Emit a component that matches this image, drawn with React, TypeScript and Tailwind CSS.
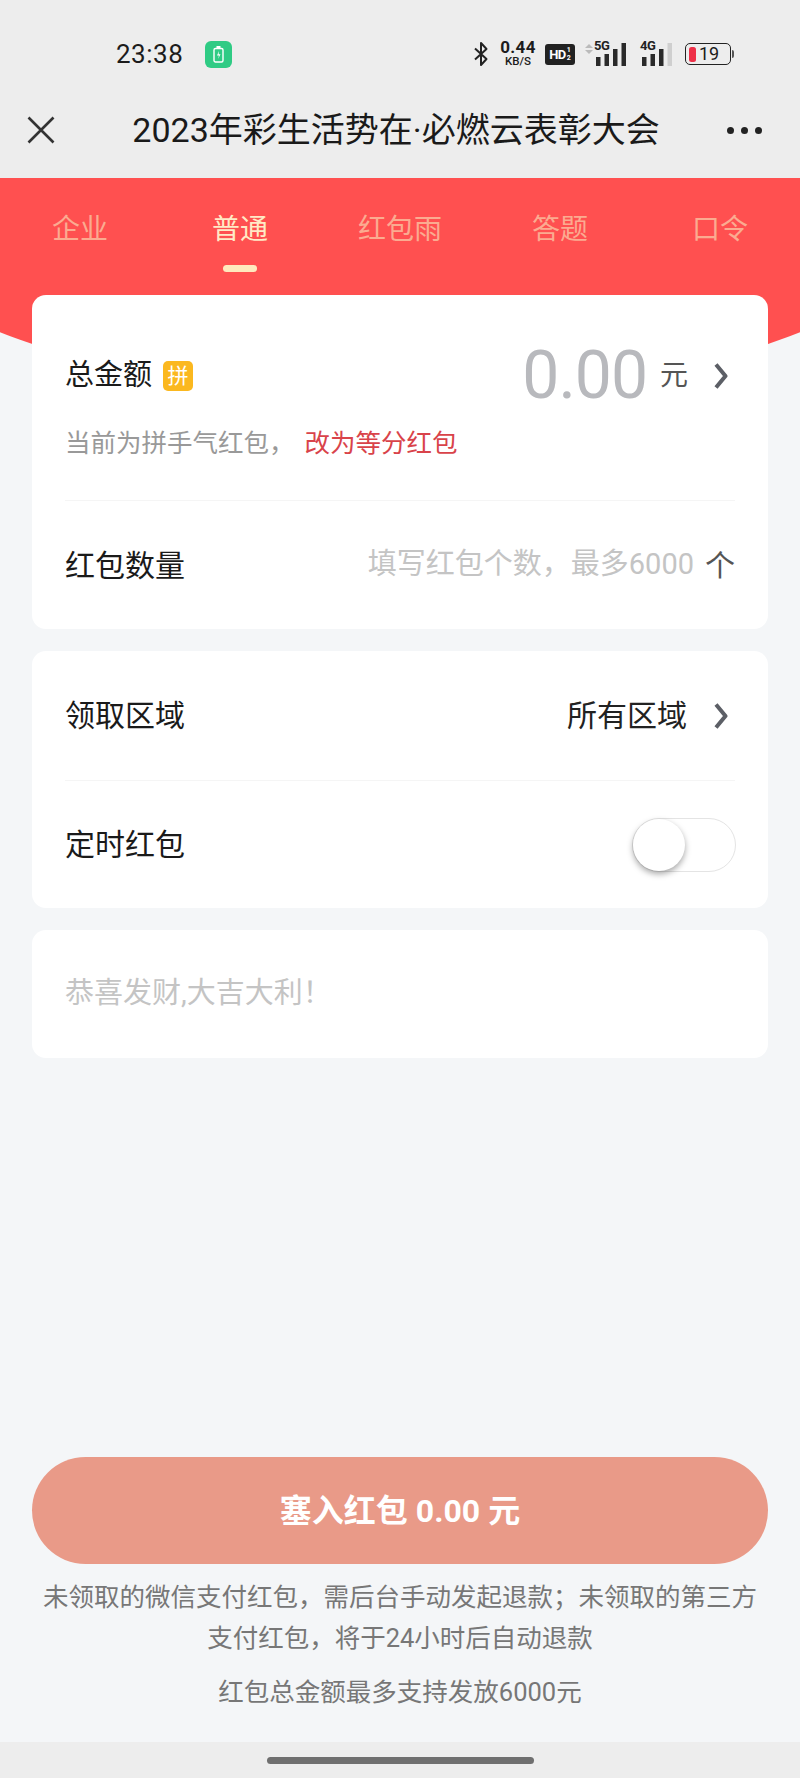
const tabs = ["企业", "普通", "红包雨", "答题", "口令"];

const Chevron = () => (
  <svg width="14" height="28" viewBox="0 0 14 28" fill="none" className="shrink-0">
    <path d="M2 2.5 L11.5 14 L2 25.5" stroke="#5c5f66" strokeWidth="4" strokeLinejoin="round" />
  </svg>
);

const Signal = ({ label, levels }: { label: string; levels: number }) => (
  <div className="relative w-[33px] h-[24px]">
    <span className="absolute left-0 top-[-3px] text-[13px] leading-[14px] font-bold text-[#222] tracking-[-0.5px]">{label}</span>
    <svg width="33" height="24" viewBox="0 0 33 24" className="absolute left-0 top-0">
      {[0, 1, 2, 3].map((i) => (
        <rect
          key={i}
          x={2 + i * 8.5}
          y={[15, 12, 7, 1][i]}
          width="4.5"
          height={[9, 12, 17, 23][i]}
          fill={i < levels ? "#2a2a2a" : "#cfcfcf"}
        />
      ))}
    </svg>
  </div>
);

const StatusBar = () => (
  <div className="h-[92px] pt-[16px] flex items-center text-[#1c1c1c]">
    <span className="ml-[116px] text-[26px] leading-none tracking-[0.5px]">23:38</span>
    <div className="ml-[22px] w-[27px] h-[27px] rounded-[6px] bg-[#2fcb84] flex items-center justify-center">
      <svg width="11" height="17" viewBox="0 0 11 17" fill="none">
        <rect x="1" y="2.5" width="9" height="13.5" rx="1.5" stroke="white" strokeWidth="1.4" />
        <rect x="3.5" y="0" width="4" height="2" fill="white" />
        <path d="M6 5 L4 9.5 H6 L5 13 L7.5 8.2 H5.6 Z" fill="white" />
      </svg>
    </div>
    <div className="ml-auto flex items-center mr-[66px]">
      <svg width="16" height="26" viewBox="0 0 16 26" fill="none">
        <path d="M2 7.5 L13.5 18 L8 24 V2 L13.5 8 L2 18.5" stroke="#222" strokeWidth="2" strokeLinejoin="round" />
      </svg>
      <div className="ml-[10px] w-[38px] flex flex-col items-center">
        <span className="text-[17px] leading-[15px] font-bold tracking-[0.3px]">0.44</span>
        <span className="text-[11.5px] leading-[13px] font-medium">KB/S</span>
      </div>
      <div className="ml-[8px] w-[30px] h-[21px] rounded-[3px] bg-[#222] text-white flex items-center justify-center">
        <span className="text-[13px] leading-none font-bold tracking-[-0.5px]">HD</span>
        <span className="text-[7px] leading-[8px] font-bold flex flex-col items-center ml-[1px]">
          <span>1</span>
          <span>2</span>
        </span>
      </div>
      <div className="ml-[10px] flex flex-col gap-[2px] mr-[1px] -mt-[10px]">
        <div className="w-0 h-0 border-x-[4px] border-x-transparent border-b-[4px] border-b-[#bbb]" />
        <div className="w-0 h-0 border-x-[4px] border-x-transparent border-t-[4px] border-t-[#bbb]" />
      </div>
      <Signal label="5G" levels={4} />
      <div className="ml-[13px]">
        <Signal label="4G" levels={3} />
      </div>
      <div className="ml-[12px] flex items-center">
        <div className="relative w-[46px] h-[22px] rounded-[5px] border-[1.5px] border-[#222] flex items-center pl-[3px]">
          <div className="w-[7px] h-[15px] rounded-[2.5px] bg-[#ee3048]" />
          <span className="ml-[3px] text-[18px] leading-none">19</span>
        </div>
        <div className="ml-[1px] w-[2px] h-[8px] rounded-r-[2px] bg-[#555]" />
      </div>
    </div>
  </div>
);

const NavBar = () => (
  <div className="h-[86px] pb-[10px] flex items-center pl-[27px] pr-[38px]">
    <svg width="28" height="28" viewBox="0 0 28 28" fill="none" className="shrink-0">
      <path d="M1.5 1.5 L26.5 26.5 M26.5 1.5 L1.5 26.5" stroke="#333" strokeWidth="2.6" />
    </svg>
    <div className="flex-1 text-center text-[34px] leading-none text-[#1a1a1a] whitespace-nowrap ml-[10px] pr-[0px]">
      2023年彩生活势在·必燃云表彰大会
    </div>
    <div className="flex gap-[7px] shrink-0">
      <div className="w-[7px] h-[7px] rounded-full bg-[#222]" />
      <div className="w-[7px] h-[7px] rounded-full bg-[#222]" />
      <div className="w-[7px] h-[7px] rounded-full bg-[#222]" />
    </div>
  </div>
);

const Tabs = () => (
  <div className="h-[222px] bg-[#ff5050] [clip-path:ellipse(600px_266px_at_400px_-44px)] pt-[32px]">
    <div className="grid grid-cols-5">
      {tabs.map((tab, i) => (
        <div key={tab} className="flex flex-col items-center">
          <div className={"text-[28px] leading-[40px] " + (i === 1 ? "text-[#ffeac6]" : "text-[#fbab90]")}>{tab}</div>
          <div className={"mt-[15px] w-[34px] h-[7px] rounded-full " + (i === 1 ? "bg-[#ffe9bd]" : "bg-transparent")} />
        </div>
      ))}
    </div>
  </div>
);

const Divider = () => <div className="mx-[33px] h-[1px] bg-[#f5f5f5]" />;

const App = () => {
  return (
    <div className="w-[800px] h-[1778px] flex flex-col bg-[#f4f6f8] overflow-hidden [font-family:Roboto,'Noto_Sans_CJK_SC',sans-serif]">
      <div className="bg-[#ededed]">
        <StatusBar />
        <NavBar />
      </div>
      <Tabs />

      <div className="relative -mt-[105px] px-[32px] flex flex-col gap-[22px]">
        <div className="bg-white rounded-[14px] h-[334px] pt-[44px]">
          <div className="h-[74px] pl-[33px] pr-[40px] flex items-center">
            <span className="text-[29px] text-[#1a1a1a]">总金额</span>
            <span className="ml-[11px] w-[30px] h-[30px] rounded-[5px] bg-[#fbb81f] text-white text-[21px] leading-[30px] text-center">拼</span>
            <span className="ml-auto text-[66px] leading-none text-[#b8b9bd] tracking-[-1px]">0.00</span>
            <span className="ml-[13px] text-[28px] text-[#555]">元</span>
            <span className="ml-[26px]">
              <Chevron />
            </span>
          </div>
          <div className="mt-[10px] mb-[37px] pl-[33px] h-[40px] flex items-center text-[25.5px]">
            <span className="text-[#999]">当前为拼手气红包，</span>
            <span className="ml-[10px] text-[#d9434a]">改为等分红包</span>
          </div>
          <Divider />
          <div className="h-[128px] px-[33px] flex items-center">
            <span className="text-[30px] text-[#1a1a1a]">红包数量</span>
            <span className="ml-auto text-[29px] text-[#c4c4c4]">填写红包个数，最多6000</span>
            <span className="ml-[11px] text-[30px] text-[#555]">个</span>
          </div>
        </div>

        <div className="bg-white rounded-[14px] h-[257px]">
          <div className="h-[129px] pl-[33px] pr-[40px] flex items-center">
            <span className="text-[30px] text-[#1a1a1a]">领取区域</span>
            <span className="ml-auto text-[30px] text-[#222]">所有区域</span>
            <span className="ml-[27px]">
              <Chevron />
            </span>
          </div>
          <Divider />
          <div className="h-[127px] pl-[33px] pr-[32px] flex items-center justify-between">
            <span className="text-[30px] text-[#1a1a1a]">定时红包</span>
            <div className="w-[104px] h-[54px] rounded-full border border-[#e4e4e4] bg-white">
              <div className="w-[52px] h-[52px] rounded-full bg-white shadow-[0_3px_6px_rgba(0,0,0,0.35)]" />
            </div>
          </div>
        </div>

        <div className="bg-white rounded-[14px] h-[128px] pl-[33px] flex items-center">
          <span className="text-[29px] text-[#c4c4c4]">恭喜发财,大吉大利！</span>
        </div>
      </div>

      <div className="mt-auto px-[32px]">
        <div className="h-[107px] rounded-full bg-[#e99a88] flex items-center justify-center text-white text-[32px] font-bold">
          塞入红包 0.00 元
        </div>
        <div className="mt-[13px] text-center text-[25.5px] leading-[41px] text-[#777]">
          <p>未领取的微信支付红包，需后台手动发起退款；未领取的第三方</p>
          <p>支付红包，将于24小时后自动退款</p>
          <p className="mt-[13px]">红包总金额最多支持发放6000元</p>
        </div>
      </div>

      <div className="mt-[29px] h-[36px] bg-[#ededed] flex items-center justify-center">
        <div className="w-[267px] h-[7px] rounded-full bg-[#6f6f6f]" />
      </div>
    </div>
  );
};

export default App;
